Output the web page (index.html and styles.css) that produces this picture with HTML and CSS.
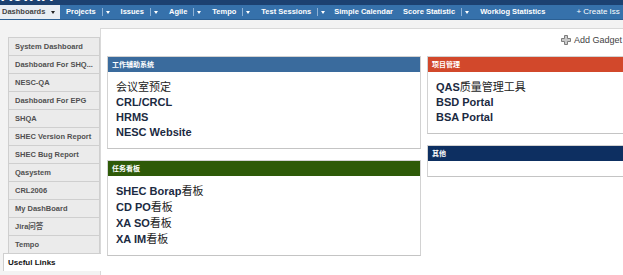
FILE: index.html
```html
<!DOCTYPE html>
<html lang="zh-CN">
<head>
    <meta charset="UTF-8">
    <title>Dashboards - Useful Links</title>
    <link rel="stylesheet" href="styles.css">
</head>
<body>
    <!-- Header strip with logo (mostly scrolled off) -->
    <div class="topbar"><span class="logo">AJIRA</span></div>

    <nav class="menu">
        <a class="menu-link current">Dashboards <span class="caret"></span></a>
        <a class="menu-link">Projects</a><span class="menu-drop"><span class="caret"></span></span>
        <a class="menu-link">Issues</a><span class="menu-drop"><span class="caret"></span></span>
        <a class="menu-link">Agile</a><span class="menu-drop"><span class="caret"></span></span>
        <a class="menu-link">Tempo</a><span class="menu-drop"><span class="caret"></span></span>
        <a class="menu-link">Test Sessions</a><span class="menu-drop"><span class="caret"></span></span>
        <a class="menu-link narrow">Simple Calendar</a>
        <a class="menu-link">Score Statistic</a><span class="menu-drop"><span class="caret"></span></span>
        <a class="menu-link">Worklog Statistics</a>
        <a class="menu-link create">+ Create Iss</a>
    </nav>

    <div class="page">
        <aside class="sidebar">
            <ul class="tabs">
                <li>System Dashboard</li>
                <li>Dashboard For SHQ...</li>
                <li>NESC-QA</li>
                <li>Dashboard For EPG</li>
                <li>SHQA</li>
                <li>SHEC Version Report</li>
                <li>SHEC Bug Report</li>
                <li>Qasystem</li>
                <li>CRL2006</li>
                <li>My DashBoard</li>
                <li>Jira问答</li>
                <li>Tempo</li>
                <li class="active">Useful Links</li>
            </ul>
        </aside>

        <main class="panel">
            <div class="toolbar">
                <span class="add-gadget">
                    <svg width="10" height="10" viewBox="0 0 10 10">
                        <path d="M3.5 0.5h3v3h3v3h-3v3h-3v-3h-3v-3h3z" fill="#c9c9c9" stroke="#7d7d7d" stroke-width="1"/>
                    </svg>
                    Add Gadget
                </span>
            </div>

            <div class="columns">
                <div class="column">
                    <section class="gadget">
                        <h3 class="gadget-title blue">工作辅助系统</h3>
                        <ul class="links">
                            <li><span class="cjk">会议室预定</span></li>
                            <li>CRL/CRCL</li>
                            <li>HRMS</li>
                            <li>NESC Website</li>
                        </ul>
                    </section>
                    <section class="gadget">
                        <h3 class="gadget-title green">任务看板</h3>
                        <ul class="links">
                            <li>SHEC Borap<span class="cjk">看板</span></li>
                            <li>CD PO<span class="cjk">看板</span></li>
                            <li>XA SO<span class="cjk">看板</span></li>
                            <li>XA IM<span class="cjk">看板</span></li>
                        </ul>
                    </section>
                </div>
                <div class="column">
                    <section class="gadget">
                        <h3 class="gadget-title red">项目管理</h3>
                        <ul class="links">
                            <li>QAS<span class="cjk">质量管理工具</span></li>
                            <li>BSD Portal</li>
                            <li>BSA Portal</li>
                        </ul>
                    </section>
                    <section class="gadget">
                        <h3 class="gadget-title navy">其他</h3>
                        <div class="gadget-empty"></div>
                    </section>
                </div>
            </div>
        </main>
    </div>
</body>
</html>
```

FILE: styles.css
```css
* {
    box-sizing: border-box;
}
body {
    margin: 0;
    font-family: "Liberation Sans", Arial, "Noto Sans CJK SC", sans-serif;
    background: #f3f3f3;
    color: #333;
    overflow: hidden;
}
ul {
    margin: 0;
    padding: 0;
    list-style: none;
}

/* Top strip */
.topbar {
    height: 5px;
    overflow: hidden;
    background: #1c4171;
}
.logo {
    display: block;
    margin-top: -12px;
    padding-left: 1px;
    font-size: 16px;
    line-height: 16px;
    font-weight: bold;
    color: #fff;
    letter-spacing: 1px;
}

/* Main menu */
.menu {
    display: flex;
    height: 15px;
    background: #3671ab;
    border-bottom: 1px solid #2b5f93;
    white-space: nowrap;
    overflow: hidden;
    font-size: 7.5px;
    font-weight: bold;
    line-height: 14px;
}
.menu-link {
    padding: 0 6px;
    color: #fff;
}
.menu-link.current {
    width: 60px;
    padding-left: 2px;
    background: #e8edf3;
    color: #444;
}
.menu-link.narrow {
    padding: 0 4px 0 4px;
}
.menu-link.create {
    margin-left: 19px;
    font-weight: normal;
    font-size: 8px;
}
.menu-drop {
    display: flex;
    align-items: center;
    padding: 0 5px 0 3px;
    margin: 3px 0;
    border-left: 1px solid #8fb2d6;
}
.caret {
    display: inline-block;
    width: 0;
    height: 0;
    border-top: 3px solid #fff;
    border-left: 2.5px solid transparent;
    border-right: 2.5px solid transparent;
    vertical-align: middle;
}
.current .caret {
    margin-left: 4px;
    border-top-color: #222;
}

/* Page */
.page {
    display: flex;
    padding-top: 8px;
}
.sidebar {
    width: 100px;
    flex-shrink: 0;
    padding: 9px 0 0 8px;
}
.tabs li {
    height: 18px;
    padding-left: 6px;
    border: 1px solid #cfcfcf;
    border-bottom: none;
    background: #ebebeb;
    font-size: 7.5px;
    font-weight: bold;
    line-height: 17px;
    color: #505050;
    white-space: nowrap;
    overflow: hidden;
}
.tabs li.active {
    position: relative;
    margin-left: -5px;
    margin-right: -1px;
    padding-left: 4px;
    border-right: none;
    background: #fff;
    font-size: 8px;
    color: #111;
}

.panel {
    flex: 1;
    min-height: 260px;
    padding-left: 6px;
    background: #fff;
    border-top: 1px solid #d9d9d9;
    border-left: 1px solid #d9d9d9;
    overflow: hidden;
}
.toolbar {
    display: flex;
    justify-content: flex-end;
    height: 27px;
    padding-top: 5px;
    padding-right: 1px;
}
.add-gadget {
    display: flex;
    align-items: center;
    gap: 3px;
    height: 12px;
    font-size: 9px;
    color: #444;
}

/* Gadgets */
.columns {
    display: grid;
    grid-template-columns: 314px 314px;
    gap: 6px;
    align-items: start;
}
.gadget {
    margin-bottom: 11px;
    border: 1px solid #d2d2d2;
    border-bottom-color: #c4c4c4;
    background: #fff;
}
.gadget-title {
    margin: 0;
    height: 15px;
    padding-left: 4px;
    font-size: 7px;
    line-height: 15px;
    font-weight: bold;
    color: #fff;
}
.gadget-title.blue { background: #3a6b9d; }
.gadget-title.green { background: #2e5a08; }
.gadget-title.red { background: #d2482b; }
.gadget-title.navy { background: #0d2f61; }

.links {
    padding: 7px 8px 8px;
    font-size: 11px;
    line-height: 15px;
    font-weight: bold;
    color: #1b2a42;
}
.cjk {
    font-family: "Noto Sans CJK SC", sans-serif;
    font-weight: normal;
    color: #222;
}
.gadget-empty {
    height: 15px;
}
```
